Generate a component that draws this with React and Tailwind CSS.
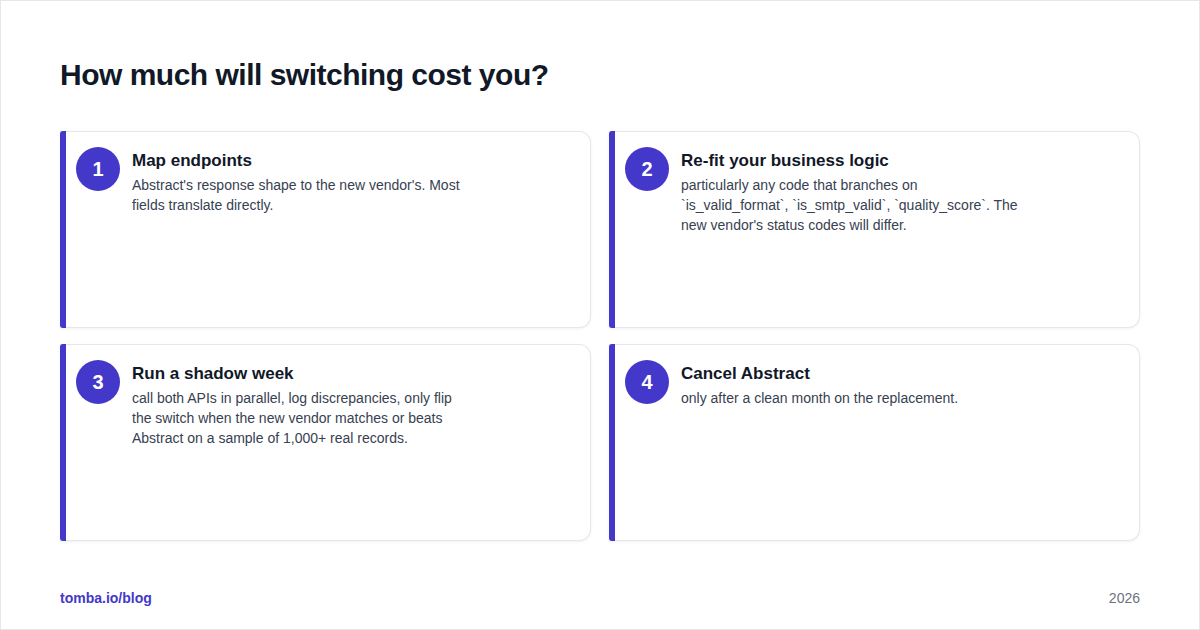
export default function App() {
  const cards = [
    ["1", "Map endpoints", "Abstract's response shape to the new vendor's. Most fields translate directly."],
    ["2", "Re-fit your business logic", "particularly any code that branches on `is_valid_format`, `is_smtp_valid`, `quality_score`. The new vendor's status codes will differ."],
    ["3", "Run a shadow week", "call both APIs in parallel, log discrepancies, only flip the switch when the new vendor matches or beats Abstract on a sample of 1,000+ real records."],
    ["4", "Cancel Abstract", "only after a clean month on the replacement."],
  ];
  return (
    <div className="w-[1200px] h-[630px] bg-white border border-[#e5e7eb] flex flex-col px-[59px] pt-[54px] pb-[20px]" style={{ fontFamily: '"Liberation Sans", Arial, sans-serif' }}>
      <h1 className="text-[30px] font-bold text-[#111827] tracking-[-0.5px] leading-[40px]">How much will switching cost you?</h1>
      <div className="grid grid-cols-2 gap-x-[18px] gap-y-[16px] mt-[36px]">
        {cards.map(([n, t, d]) => (
          <div key={n} className="h-[197px] flex rounded-r-[12px] border border-l-0 border-[#e5e7eb] shadow-[0_1px_3px_rgba(0,0,0,0.06)] bg-white">
            <div className="w-[6px] bg-[#4338ca] rounded-l-[3px] -my-px"></div>
            <div className="flex gap-[12px] pl-[10px] pt-[15px]">
              <div className="w-[44px] h-[44px] rounded-full bg-[#4338ca] text-white font-bold text-[20px] flex items-center justify-center shrink-0">{n}</div>
              <div className="pt-[4px]">
                <div className="text-[17px] font-bold text-[#111827] leading-[20px]">{t}</div>
                <div className="mt-[4px] text-[14px] leading-[20px] text-[#374151] max-w-[340px]">{d}</div>
              </div>
            </div>
          </div>
        ))}
      </div>
      <div className="mt-auto flex justify-between items-center text-[14px]">
        <span className="font-bold text-[#4338ca]">tomba.io/blog</span>
        <span className="text-[#6b7280]">2026</span>
      </div>
    </div>
  );
}
